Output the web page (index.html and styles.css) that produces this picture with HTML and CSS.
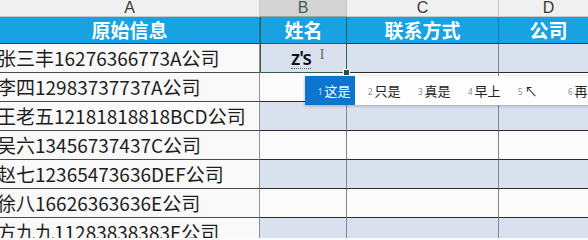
FILE: index.html
```html
<!DOCTYPE html>
<html lang="zh">
<head>
<meta charset="utf-8">
<link rel="stylesheet" href="styles.css">
</head>
<body>
<div class="sheet">
  <div class="grid">
    <div class="ch">A</div>
    <div class="ch ch-sel">B</div>
    <div class="ch">C</div>
    <div class="ch">D</div>

    <div class="th">原始信息</div>
    <div class="th th-sel">姓名</div>
    <div class="th">联系方式</div>
    <div class="th">公司</div>

    <div class="ca">张三丰16276366773A公司</div>
    <div class="cb blue active"><span class="comp">z's</span><span class="ibeam">I</span></div>
    <div class="cb blue"></div>
    <div class="cb blue"></div>

    <div class="ca">李四12983737737A公司</div>
    <div class="cb white"></div>
    <div class="cb white"></div>
    <div class="cb white"></div>

    <div class="ca">王老五12181818818BCD公司</div>
    <div class="cb blue"></div>
    <div class="cb blue"></div>
    <div class="cb blue"></div>

    <div class="ca">吴六13456737437C公司</div>
    <div class="cb white"></div>
    <div class="cb white"></div>
    <div class="cb white"></div>

    <div class="ca">赵七12365473636DEF公司</div>
    <div class="cb blue"></div>
    <div class="cb blue"></div>
    <div class="cb blue"></div>

    <div class="ca">徐八16626363636E公司</div>
    <div class="cb white"></div>
    <div class="cb white"></div>
    <div class="cb white"></div>

    <div class="ca">方九九11283838383E公司</div>
    <div class="cb blue"></div>
    <div class="cb blue"></div>
    <div class="cb blue"></div>
  </div>

  <div class="handle"></div>

  <div class="ime">
    <div class="cand cand-sel"><span class="num">1</span>这是</div>
    <div class="cand"><span class="num">2</span>只是</div>
    <div class="cand"><span class="num">3</span>真是</div>
    <div class="cand"><span class="num">4</span>早上</div>
    <div class="cand"><span class="num">5</span>↖</div>
    <div class="cand"><span class="num">6</span>再</div>
  </div>
</div>
</body>
</html>
```

FILE: styles.css
```css
html, body {
  margin: 0;
  padding: 0;
  width: 588px;
  height: 238px;
  overflow: hidden;
  background: #fdfdfd;
}

.sheet {
  position: relative;
  width: 600px;
  height: 238px;
  overflow: hidden;
  font-family: "Noto Sans CJK SC", "Noto Sans", sans-serif;
}

.grid {
  display: grid;
  grid-template-columns: 260px 87px 152px 100px;
  grid-template-rows: 17px 27px repeat(7, 29px);
}

.ch {
  box-sizing: border-box;
  background: #f0f0f0;
  border-right: 1px solid #c9c9c9;
  border-bottom: 1px solid #c9c9c9;
  color: #3a3a3a;
  font-family: "Liberation Sans", "Noto Sans", sans-serif;
  font-size: 16px;
  line-height: 16px;
  text-align: center;
}

.ch-sel {
  background: #d4d4d4;
  color: #3f5f4d;
  border-bottom: 1px solid #9aa59e;
}

.th {
  box-sizing: border-box;
  background: #18a2e2;
  color: #fff;
  font-weight: bold;
  font-size: 19px;
  line-height: 26px;
  text-align: center;
  border-right: 1px solid #0f7fb8;
  border-bottom: 1px solid #2a3b44;
}

.th-sel {
  border: 1px solid #23614a;
  border-top: none;
  line-height: 25px;
}

.ca {
  box-sizing: border-box;
  background: #f9f9f9;
  color: #1e1e1e;
  font-size: 19px;
  line-height: 28px;
  white-space: nowrap;
  text-indent: -3px;
  border-right: 1px solid #8d9197;
  border-bottom: 1px solid #4a4a4a;
  overflow: hidden;
}

.cb {
  box-sizing: border-box;
  border-right: 1px solid #80868e;
  border-bottom: 1px solid #2c2c2c;
}

.blue {
  background: #d9e1ef;
}

.white {
  background: #fbfbfb;
}

.active {
  border: 1px solid #2f5f48;
  border-top: none;
  display: flex;
  align-items: center;
  padding-left: 30px;
  gap: 9px;
}

.comp {
  font-family: "Noto Sans", "Liberation Sans", sans-serif;
  font-size: 19px;
  font-weight: 600;
  color: #111;
  line-height: 20px;
  border-bottom: 1px dotted #666;
  letter-spacing: -1px;
}

.ibeam {
  font-family: "Liberation Serif", serif;
  font-size: 14px;
  color: #666;
  line-height: 14px;
  margin-top: -6px;
}

.handle {
  position: absolute;
  left: 343px;
  top: 69px;
  width: 5px;
  height: 5px;
  background: #24523d;
  border: 1px solid #fff;
}

.ime {
  position: absolute;
  left: 305px;
  top: 76px;
  height: 29px;
  width: 300px;
  display: flex;
  background: #fdfdfd;
  box-shadow: 0 1px 3px rgba(0, 0, 0, 0.25);
}

.cand {
  box-sizing: border-box;
  width: 53px;
  padding-left: 13px;
  display: flex;
  align-items: center;
  font-size: 13px;
  color: #222;
  white-space: nowrap;
}

.cand-sel {
  background: #0b75cf;
  color: #fff;
}

.num {
  font-family: "Noto Sans", "Liberation Sans", sans-serif;
  font-size: 8px;
  color: #8a8a8a;
  margin-right: 2px;
  padding-top: 2px;
}

.cand-sel .num {
  color: #cfe3f6;
}
```
